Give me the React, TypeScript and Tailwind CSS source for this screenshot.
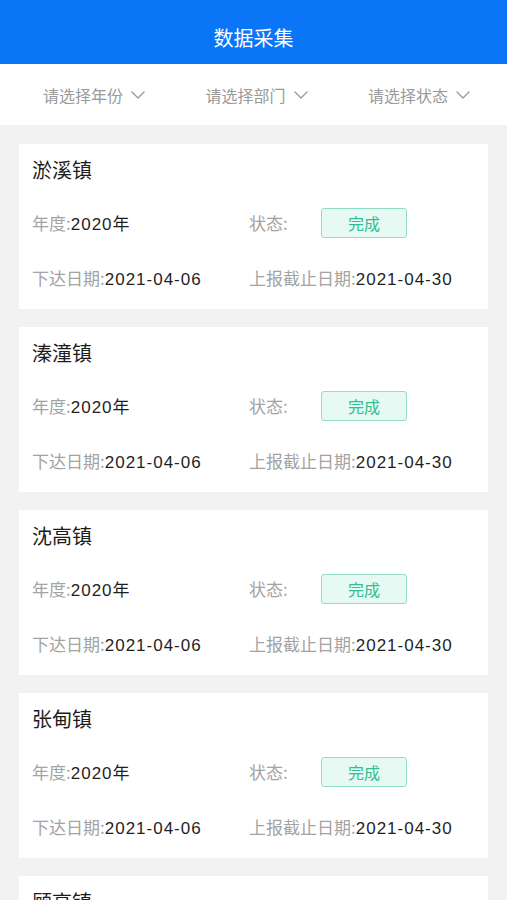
const tasks = [
  { name: "淤溪镇", year: "2020", status: "完成", issued: "2021-04-06", deadline: "2021-04-30" },
  { name: "溱潼镇", year: "2020", status: "完成", issued: "2021-04-06", deadline: "2021-04-30" },
  { name: "沈高镇", year: "2020", status: "完成", issued: "2021-04-06", deadline: "2021-04-30" },
  { name: "张甸镇", year: "2020", status: "完成", issued: "2021-04-06", deadline: "2021-04-30" },
  { name: "顾高镇", year: "2020", status: "完成", issued: "2021-04-06", deadline: "2021-04-30" },
]

const filters = ["请选择年份", "请选择部门", "请选择状态"]

const numFont = { fontFamily: '"Liberation Sans", "Noto Sans CJK SC", sans-serif' }

function Chevron() {
  return (
    <svg width="14" height="8" viewBox="0 0 14 8" fill="none" className="ml-[8px]">
      <path d="M1 1l6 6 6-6" stroke="#9a9a9a" strokeWidth="1.4" strokeLinecap="round" strokeLinejoin="round" />
    </svg>
  )
}

export default function App() {
  return (
    <div
      className="w-[507px] h-[900px] overflow-hidden bg-[#f2f2f2]"
      style={{ fontFamily: '"Noto Sans CJK SC", "Noto Sans", sans-serif' }}
    >
      <div className="h-[64px] bg-[#0a75f7] flex items-end justify-center pb-[12px]">
        <h1 className="text-white text-[20px] leading-[28px]">数据采集</h1>
      </div>

      <div className="h-[61px] bg-white flex items-center justify-between pl-[43px] pr-[37px]">
        {filters.map((f) => (
          <div key={f} className="flex items-center text-[16px] text-[#9a9a9a]">
            <span>{f}</span>
            <Chevron />
          </div>
        ))}
      </div>

      <div className="flex flex-col gap-[18px] px-[19px] pt-[19px]">
        {tasks.map((t) => (
          <div key={t.name} className="bg-white pl-[13px] pr-4 pt-[12px] pb-[19px] shrink-0">
            <div className="text-[20px] leading-[28px] text-[#1c1c1c]">{t.name}</div>
            <div className="grid grid-cols-[217px_1fr] mt-[24px] text-[17px]">
              <div className="leading-[30px] h-[30px] whitespace-nowrap">
                <span className="text-[#a3a3a3]">年度:</span>
                <span className="text-[#1f1f1f] tracking-[1px]" style={numFont}>{t.year}</span>
                <span className="text-[#1f1f1f]">年</span>
              </div>
              <div className="flex items-center h-[30px]">
                <span className="text-[#a3a3a3] w-[72px]">状态:</span>
                <span className="w-[86px] h-[30px] rounded-[3px] border border-[#93dcc6] bg-[#e6f9f3] text-[#2fbf93] text-[16px] flex items-center justify-center">
                  {t.status}
                </span>
              </div>
              <div className="leading-[24px] h-[24px] mt-[28px] whitespace-nowrap">
                <span className="text-[#a3a3a3]">下达日期:</span>
                <span className="text-[#1f1f1f] tracking-[1px]" style={numFont}>{t.issued}</span>
              </div>
              <div className="leading-[24px] h-[24px] mt-[28px] whitespace-nowrap">
                <span className="text-[#a3a3a3]">上报截止日期:</span>
                <span className="text-[#1f1f1f] tracking-[1px]" style={numFont}>{t.deadline}</span>
              </div>
            </div>
          </div>
        ))}
      </div>
    </div>
  )
}
